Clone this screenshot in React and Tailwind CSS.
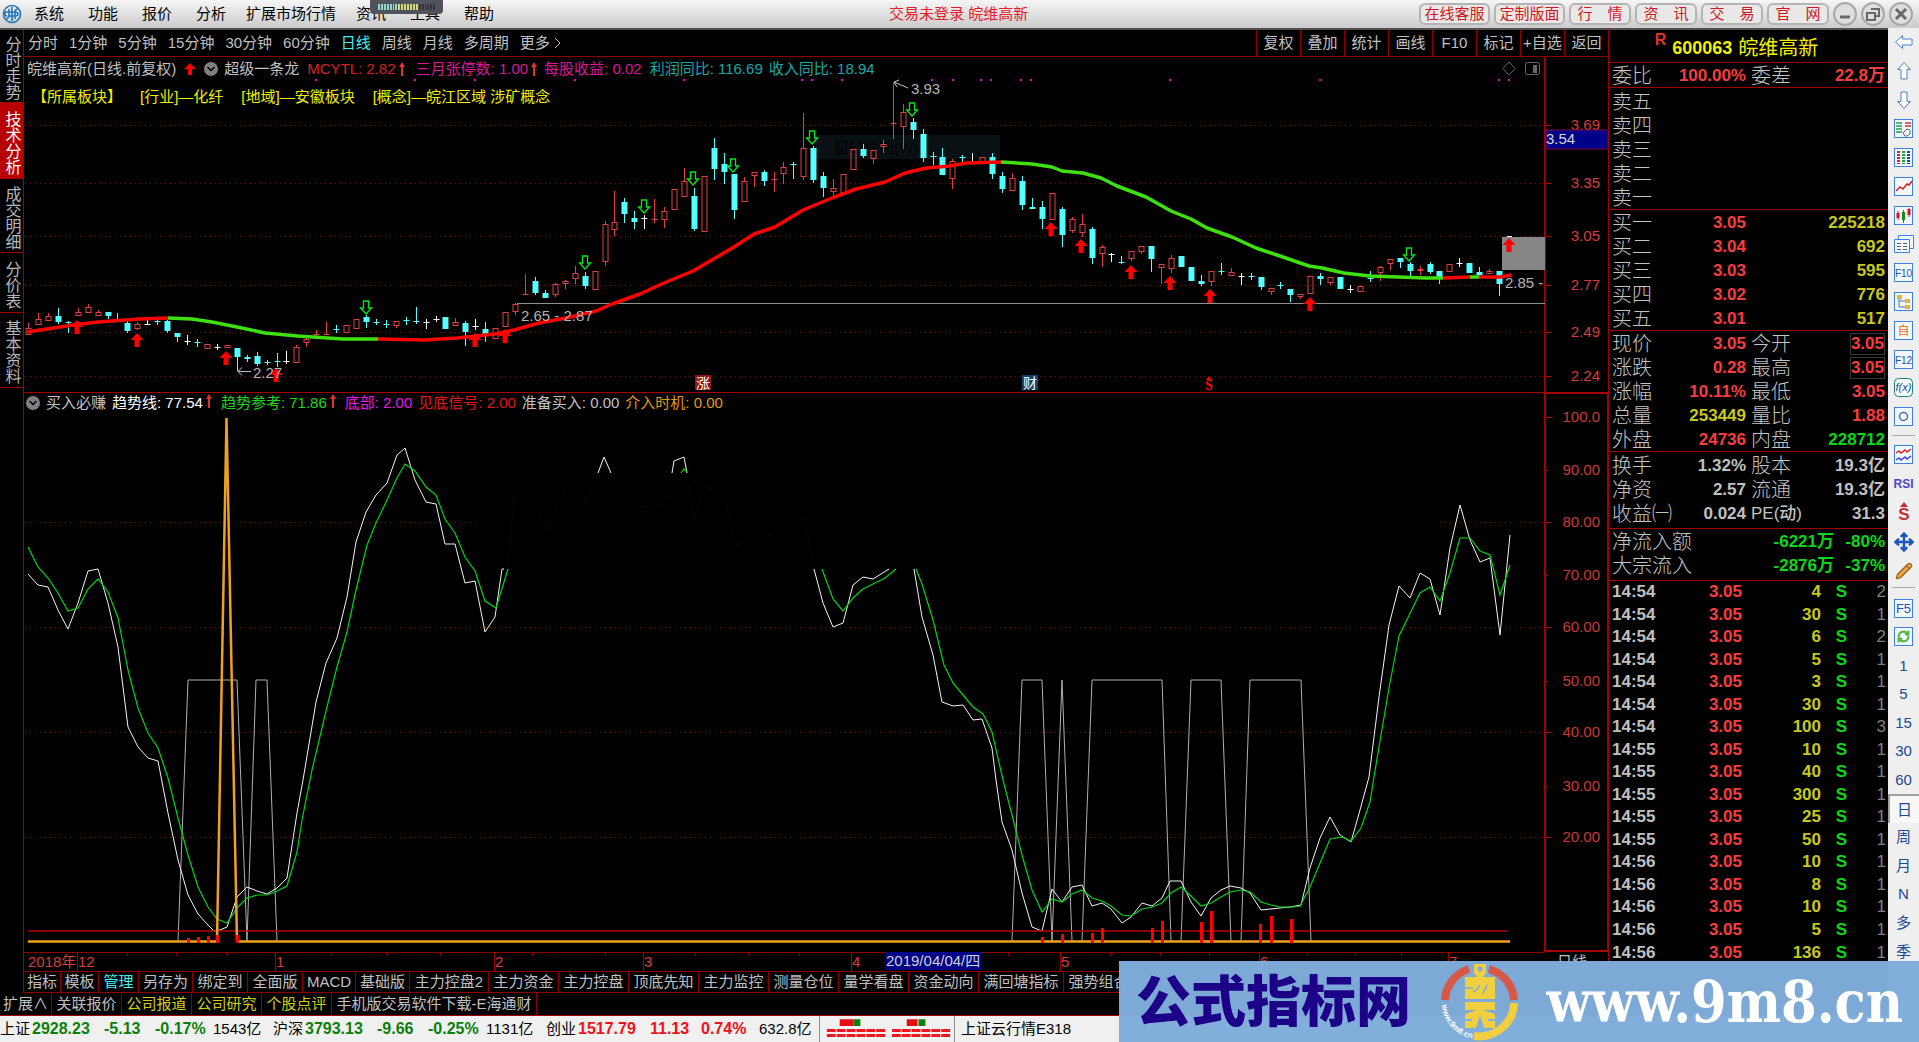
import { ChevronDown, Move, Pencil, RefreshCw } from "lucide-react";

// one entry per trading day: type, body top, body bottom, high, low
// r = rising (hollow red), c = falling (solid cyan), w = unchanged (white)
const CANDLES = `r 328 335 323 335|r 319 325 313 325|r 316 321 313 321|c 316 322 308 324|c 322 323 321 333|r 312 316 308 316|r 307 313 304 313|r 312 316 310 316|c 312 316 312 319|c 319 320 313 322
c 323 331 321 333|r 324 329 322 330|w 324 325 319 325|c 321 322 318 325|c 321 331 320 333|c 333 337 333 342|w 341 342 335 345|c 342 343 339 347|r 344 349 344 349|w 347 348 344 350
r 345 348 345 348|c 348 357 348 371|c 357 359 355 362|c 356 364 352 366|c 362 363 360 365|c 361 362 353 367|w 361 362 351 364|r 347 363 345 363|r 339 343 337 347|r 334 335 330 337
r 334 335 322 335|c 329 330 325 333|r 325 333 325 333|r 319 329 319 329|c 317 322 315 328|c 322 323 319 325|c 324 325 320 328|r 321 326 321 328|c 320 321 317 325|c 321 322 307 324
w 322 323 319 329|w 319 320 316 322|c 317 329 317 329|r 322 326 318 326|c 323 332 321 346|w 326 327 319 330|c 329 334 322 342|r 328 339 328 339|r 312 327 312 327|r 304 312 303 315
r 294 295 274 295|c 281 293 277 295|c 293 298 290 298|r 284 295 283 297|r 281 284 280 289|r 273 279 266 284|c 276 286 272 289|r 271 290 271 290|r 224 262 221 266|r 222 230 191 236
c 202 214 198 223|c 218 222 211 229|w 218 219 215 229|r 219 220 199 223|r 211 220 207 228|r 189 210 189 210|r 181 197 168 197|c 196 229 188 231|r 176 232 176 232|c 148 169 138 180
c 164 172 153 184|c 174 210 174 219|r 181 202 177 202|r 172 176 172 187|c 172 181 170 186|r 179 180 172 192|r 167 174 162 184|c 164 165 162 179|r 148 177 113 180|c 148 180 146 183
c 176 188 172 197|r 188 192 179 196|r 174 193 174 193|r 149 170 149 170|c 149 156 144 158|r 150 159 150 164|r 144 147 140 153|r 123 124 83 139|r 112 127 104 149|c 122 130 118 139
c 134 158 129 162|c 156 157 152 165|c 157 175 148 175|r 161 179 159 189|c 157 158 155 162|w 162 163 153 163|r 157 162 157 162|c 157 174 153 179|c 176 189 172 193|r 178 191 173 191
c 181 205 176 210|c 207 209 198 209|c 207 219 201 229|r 193 220 193 220|c 209 235 207 247|r 219 231 217 233|r 224 233 214 237|c 229 258 227 264|r 247 254 245 267|w 254 255 253 262
c 262 263 256 264|r 251 259 251 261|r 246 252 246 254|c 246 259 246 272|r 264 268 264 284|r 258 269 255 273|c 256 267 256 267|c 267 281 267 281|c 281 284 275 286|r 271 282 271 286
c 271 272 263 275|r 272 276 268 276|w 276 277 273 285|c 276 277 273 280|c 277 287 277 290|r 288 292 288 295|c 285 286 282 289|c 289 295 289 302|r 294 297 294 299|r 276 294 276 294
c 276 279 273 285|r 277 283 277 285|c 277 289 277 289|w 289 290 285 293|r 286 292 286 292|c 278 279 271 282|r 267 273 266 281|r 259 264 259 270|c 258 262 258 268|c 264 271 262 277
r 269 271 266 275|c 264 272 262 274|c 271 278 271 284|r 264 272 264 272|w 263 264 258 267|c 263 273 263 273|c 272 275 267 277|r 271 274 269 274|c 271 284 271 296`
  .split(/[\n|]/)
  .map((row) => {
    const [type, ...v] = row.split(" ");
    return [type, ...v.map(Number)];
  });

const CANDLE_COLOR = { r: "#e04040", c: "#54ffff", w: "#ffffff" };

const MA_LINES = [
  ["#ff0000", "27,332 73,325 98,322 139,319 168,318"],
  ["#3fe010", "168,318 192,319 212,322 237,327 265,333 298,336 343,339 378,339"],
  ["#ff0000", "378,339 424,340 457,338 495,334 514,330 539,323 571,317 596,311 612,304 640,294 664,283 693,271 734,247 754,234 775,227 803,210 832,198 856,189 885,182 905,173 926,168 950,166 966,163 1001,162"],
  ["#3fe010", "1001,162 1032,164 1052,167 1062,171 1083,173 1101,178 1117,186 1146,197 1171,211 1191,219 1207,228 1232,237 1256,248 1280,256 1309,266 1322,268 1344,273 1370,276 1426,278 1443,278"],
  ["#ff0000", "1443,278 1470,277"],
  ["#3fe010", "1470,277 1479,277"],
  ["#ff0000", "1479,277 1500,277 1511,275"],
];

const BUY_ARROWS = [[77, 320], [137, 333], [226, 351], [276, 368], [475, 333], [505, 329], [1051, 222], [1081, 239], [1131, 265], [1170, 276], [1210, 289], [1310, 297], [1509, 238]];
const SELL_ARROWS = [[366, 314], [585, 269], [644, 213], [693, 185], [733, 172], [812, 144], [912, 116], [1409, 261]];
const DOTS = [316, 415, 475, 575, 684, 802, 812, 842, 932, 953, 981, 991, 1021, 1031, 1170, 1320, 1499, 1509];
const PRICE_TICKS = [["3.69", 125], ["3.35", 183], ["3.05", 236], ["2.77", 285], ["2.49", 332], ["2.24", 376]];

const WHITE_LINES = [
  "28,574 38,585 48,587 58,610 68,629 78,603 88,571 98,569 108,603 118,647 128,727 138,747 148,758 158,761 168,813 178,860 188,895 198,914 208,925 214,931 220,930 227,927 237,897 247,887 257,891 267,894 277,888 287,878 297,813 303,780 311,732 316,702 326,663 337,638 347,597 356,542 366,512 376,495 387,483 397,455 405,448 415,480 426,502 436,504 445,544 455,544 465,583 475,581 485,632 495,617 502,569 504,569",
  "598,473 604,457 611,473",
  "672,473 674,461 684,457 687,473",
  "814,569 823,603 833,627 843,623 853,585 863,577 873,579 889,569",
  "914,569 922,617 933,655 942,702 953,706 963,705 973,720 982,719 992,748 996,780 1002,822 1012,850 1022,893 1032,927 1042,931 1052,889 1062,902 1072,887 1082,885 1092,906 1102,903 1111,909 1122,923 1131,917 1142,903 1152,906 1162,898 1170,881 1181,881 1191,902 1201,916 1211,898 1221,890 1230,886 1241,888 1250,893 1261,910 1280,908 1290,907 1301,905 1310,868 1320,838 1330,817 1340,835 1351,842 1360,810 1369,777 1379,697 1389,625 1399,586 1410,598 1420,573 1430,579 1440,615 1450,548 1460,505 1470,540 1480,562 1490,558 1500,635 1510,535",
];

const GREEN_LINES = [
  "28,547 38,567 48,578 58,593 68,611 78,608 88,589 98,579 108,592 118,618 128,670 138,708 148,733 158,748 168,778 178,818 188,855 198,887 208,907 217,919 227,923 237,908 247,898 257,895 267,895 277,891 287,886 297,852 302,820 312,770 327,707 337,667 347,632 356,590 367,545 376,523 387,500 397,478 405,464 415,471 426,487 436,495 445,519 455,533 465,557 475,571 485,601 496,608 508,569",
  "681,473 684,469 687,472",
  "822,569 833,599 843,611 853,598 863,589 873,584 885,578 896,569",
  "916,569 922,584 933,620 944,665 953,683 963,695 973,707 983,714 992,732 1003,780 1012,815 1022,855 1032,890 1042,912 1052,899 1062,902 1072,894 1082,890 1092,898 1102,901 1111,906 1122,915 1131,916 1142,909 1152,907 1162,903 1171,893 1181,887 1191,896 1201,906 1211,903 1221,897 1230,892 1241,890 1250,892 1261,902 1271,905 1280,907 1292,907 1300,906 1310,887 1330,839 1342,837 1351,841 1361,828 1370,802 1374,777 1379,747 1389,688 1399,636 1420,593 1430,587 1440,601 1450,573 1460,538 1470,538 1480,551 1490,555 1500,595 1510,565",
];

const READY_LINES = [
  "178,941 188,680 237,680 247,941 256,680 267,680 277,941",
  "1012,941 1022,680 1042,680 1052,941 1062,680 1072,941",
  "1082,941 1092,680 1162,680 1171,941",
  "1181,941 1191,680 1221,680 1231,941",
  "1241,941 1250,680 1301,680 1311,941",
];

const SIGNAL_BARS = [[188, 938], [198, 937], [208, 936], [217, 935], [237, 935], [1042, 937], [1062, 934], [1092, 933], [1102, 928], [1152, 928], [1162, 921], [1201, 922], [1211, 911], [1260, 924], [1271, 916], [1291, 919]];
const LEVEL_TICKS = [["100.0", 417], ["90.00", 470], ["80.00", 522], ["70.00", 575], ["60.00", 627], ["50.00", 681], ["40.00", 732], ["30.00", 786], ["20.00", 837]];
const DAY_TICKS = [127, 176, 226, 331, 386, 440, 532, 605, 695, 748, 799, 1008, 1110, 1160, 1209, 1307, 1355, 1401];

function PriceChart() {
  return (
    <svg className="block h-[335px] w-full" viewBox="24 57 1584 335" preserveAspectRatio="none" fontSize="15">
      <rect x="815" y="135" width="185" height="24" fill="#0a1115" />
      <text x="834" y="153" fill="#020405">窗口截图(W)</text>
      {PRICE_TICKS.map(([label, y]) => (
        <g key={label}>
          <line x1="25" x2="1545" y1={y + 0.5} y2={y + 0.5} stroke="#7c1010" strokeDasharray="1 4" />
          <line x1="1545" x2="1551" y1={y + 0.5} y2={y + 0.5} stroke="#b00000" />
          <text x="1600" y={y + 5} fill="#d83c3c" textAnchor="end">{label}</text>
        </g>
      ))}
      <line x1="1545" x2="1545" y1="57" y2="392" stroke="#a00000" strokeWidth="2" />
      <rect x="1546" y="130" width="62" height="19" fill="#000088" stroke="#800040" />
      <text x="1546" y="144" fill="#d8d8d8">3.54</text>

      {DOTS.map((x) => (
        <rect key={x} x={x - 1} y="79" width="2" height="2" fill="#e000e0" />
      ))}

      <rect x="1502" y="237" width="43" height="33" fill="#868686" />
      {CANDLES.map(([type, top, bottom, high, low], i) => {
        const x = Math.round(28 + i * 9.94) + 0.5;
        const color = CANDLE_COLOR[type];
        const doji = bottom - top <= 1;
        return (
          <g key={i} stroke={color}>
            <line x1={x} x2={x} y1={high} y2={type === "r" && !doji ? top : low} />
            {type === "r" && !doji && <line x1={x} x2={x} y1={bottom} y2={low} />}
            {doji ? (
              <line x1={x - 3} x2={x + 3} y1={top + 0.5} y2={top + 0.5} />
            ) : (
              <rect x={x - 2.5} y={top + 0.5} width="5" height={bottom - top - 1} fill={type === "r" ? "none" : color} />
            )}
          </g>
        );
      })}

      <line x1="517" x2="1545" y1="303.5" y2="303.5" stroke="#909090" />
      {MA_LINES.map(([color, points]) => (
        <polyline key={points} points={points} fill="none" stroke={color} strokeWidth="3.500" strokeLinejoin="round" />
      ))}
      {BUY_ARROWS.map(([x, y]) => (
        <path key={x} d={`M${x} ${y}l6.5 7h-4v7h-5v-7h-4z`} fill="#ff0000" />
      ))}
      {SELL_ARROWS.map(([x, y]) => (
        <path key={x} d={`M${x} ${y}l5.5-6h-3v-7h-5v7h-3z`} fill="none" stroke="#00e820" strokeWidth="1.300" />
      ))}
      <rect x="1507" y="236" width="5" height="1" fill="#fff" />

      <g fill="#b4b4b4">
        <text x="521" y="321">2.65 - 2.87</text>
        <text x="253" y="378">2.27</text>
        <text x="911" y="94">3.93</text>
        <text x="1505" y="288">2.85 -</text>
      </g>
      <path d="M251 371.5H238m4-4-4 4 4 4M908 88l-14-6m5-2-5 2 3 5" fill="none" stroke="#c0c0c0" />

      <rect x="695" y="375" width="16" height="15" fill="#8c1414" />
      <text x="703" y="388" fill="#fff" fontSize="14" textAnchor="middle">涨</text>
      <rect x="1022" y="375" width="16" height="15" fill="#124070" />
      <text x="1030" y="388" fill="#fff" fontSize="14" textAnchor="middle">财</text>
      <text x="1209" y="390" fill="#ff0000" fontSize="14" fontWeight="bold" fontFamily="Liberation Serif" textAnchor="middle">S</text>
      <path d="m1209 376 3 4h-6z" fill="#ff0000" />

      <path d="m1509 62 6 6.500-6 6.500-6-6.500z" fill="none" stroke="#686868" />
      <rect x="1525.500" y="62.500" width="14" height="12" rx="2" fill="none" stroke="#686868" />
      <rect x="1533" y="65" width="4" height="8" fill="#686868" />
    </svg>
  );
}

function TrendChart() {
  return (
    <svg className="block h-[560px] w-full overflow-visible" viewBox="24 392 1584 560" preserveAspectRatio="none" fontSize="15">
      <line x1="24" x2="1608" y1="392.500" y2="392.500" stroke="#a00000" />
      <line x1="24" x2="1545" y1="952.500" y2="952.500" stroke="#8c0000" />
      {[627, 732, 837].map((y) => (
        <line key={y} x1="25" x2="1545" y1={y + 0.5} y2={y + 0.5} stroke="#7c1010" strokeDasharray="1 4" />
      ))}
      <path d="M25 522.500H480M1440 522.500H1545" stroke="#7c1010" strokeDasharray="1 4" />
      {LEVEL_TICKS.map(([label, y], i) => (
        <g key={label}>
          <line x1="1545" x2={i % 2 ? 1548 : 1551} y1={y + 0.5} y2={y + 0.5} stroke="#b00000" />
          <text x="1600" y={y + 5} fill="#c83838" textAnchor="end">{label}</text>
        </g>
      ))}
      <rect x="1545" y="393" width="63" height="558" fill="none" stroke="#a80000" strokeWidth="2" />
      {DAY_TICKS.map((x) => (
        <line key={x} x1={x + 0.5} x2={x + 0.5} y1="953" y2="956" stroke="#8c0000" />
      ))}

      <polyline
        points="508,569 515,485 535,502 546,532 563,493 575,475 586,504 604,457 640,505 655,510 665,500 674,461 684,457 694,520 704,486 725,495 735,547 755,530 775,537 797,518 805,520 814,569"
        fill="none"
        stroke="#080808"
      />
      {READY_LINES.map((points) => (
        <polyline key={points} points={points} fill="none" stroke="#b0b0b0" />
      ))}
      {WHITE_LINES.map((points) => (
        <polyline key={points} points={points} fill="none" stroke="#f4f4f4" />
      ))}
      {GREEN_LINES.map((points) => (
        <polyline key={points} points={points} fill="none" stroke="#00d414" strokeWidth="1.200" />
      ))}
      <line x1="28" x2="1508" y1="931" y2="931" stroke="#b80000" strokeWidth="1.500" />
      <polyline points="28,941.500 217,941.500 226.500,418 237,941.500 1510,941.500" fill="none" stroke="#f0a020" strokeWidth="2.500" strokeLinejoin="bevel" />
      {SIGNAL_BARS.map(([x, y]) => (
        <rect key={x} x={x - 1} y={y} width="3" height={943 - y} fill="#ff0000" />
      ))}
    </svg>
  );
}

function Rise({ big }) {
  return big ? (
    <svg className="mx-2 h-3 w-3" viewBox="0 0 12 12"><path d="M6 0l6 6H8v6H4V6H0z" fill="#ff0000" /></svg>
  ) : (
    <svg className="mx-0.5 h-4 w-2" viewBox="0 0 8 16"><path d="M4 1l3 5H5v9H3V6H1z" fill="#e03030" /></svg>
  );
}

function Fold() {
  return (
    <button aria-label="指标菜单" className="grid h-3.5 w-3.5 place-items-center rounded-full bg-[#808080] text-black">
      <ChevronDown className="h-3 w-3" strokeWidth={3} />
    </button>
  );
}

const MENU = ["系统", "功能", "报价", "分析", "扩展市场行情", "资讯", "工具", "帮助"];
const LINKS = ["行　情", "资　讯", "交　易", "官　网"];

function TitleBar() {
  return (
    <header className="flex h-7 items-center bg-linear-to-b from-[#f6f6f6] to-[#cbcbcb] pr-1.5 pl-0.5 text-black">
      <svg className="h-5 w-5 shrink-0" viewBox="0 0 20 20" fill="none" stroke="#2478b8" strokeWidth="1.600">
        <circle cx="10" cy="10" r="8.500" />
        <path d="M10 3v14M3 8h10c4 0 4 4 0 4H7M5 12c-3 0-3-4 0-4M7 5v6c0 3-3 4-3 4M13 15V8c0-3 3-3 3-3" />
      </svg>
      <nav className="relative ml-3 flex">
        {MENU.map((m) => (
          <button key={m} className={m === "扩展市场行情" ? "mr-5 -ml-1" : "mr-6"}>{m}</button>
        ))}
        {/* level meter hanging over the menu */}
        <div className="absolute -top-1 left-[336px] flex h-3.5 w-[73px] gap-px rounded-b bg-[#50525c] px-2 py-1">
          {Array.from({ length: 20 }, (_, i) => (
            <i key={i} className={i < 7 ? "w-0.5 bg-[#8fd8d0]" : i < 14 ? "w-0.5 bg-[#d8d870]" : "w-0.5 bg-[#34363e]"} />
          ))}
        </div>
      </nav>
      <p className="flex-1 pr-5 text-center text-[#e81c28]">交易未登录 皖维高新</p>
      <div className="flex items-center gap-1 text-[#d01824]">
        {["在线客服", "定制版面"].map((t) => (
          <button key={t} className="h-[22px] w-[71px] rounded-md border-2 border-[#b4b4b4] bg-[#e8e8e8] leading-4 whitespace-nowrap">
            <span className="-mx-2">{t}</span>
          </button>
        ))}
        {LINKS.map((t) => (
          <button key={t} className="h-[22px] w-[62px] rounded-md border-2 border-[#b4b4b4] bg-[#e8e8e8] leading-4">{t}</button>
        ))}
      </div>
      <div className="ml-1 flex gap-1">
        {["M5 13h10", "M8 5h8v7h-3M4 9h8v7H4z", "m5 5 10 10M15 5 5 15"].map((d, i) => (
          <button key={d} aria-label={["最小化", "还原", "关闭"][i]} className="grid h-6 w-6 place-items-center rounded-full border-2 border-[#a8a8a8] bg-[#dedede]">
            <svg className="h-5 w-5" viewBox="0 0 20 20" fill="none" stroke="#686868" strokeWidth={i === 1 ? 2 : 3}><path d={d} /></svg>
          </button>
        ))}
      </div>
    </header>
  );
}

const VIEWS = [["分时走势", "h-[73px]"], ["技术分析", "h-[76px]"], ["成交明细", "h-[74px]"], ["分价表", "h-[60px]"], ["基本资料", "h-[75px]"]];

function ViewTabs() {
  return (
    <nav className="w-6 shrink-0 border-r border-[#a00000]">
      {VIEWS.map(([name, height]) => (
        <button
          key={name}
          className={`${height} block w-full border-b border-[#a00000] pt-1 text-base leading-[22px] [writing-mode:vertical-rl] ${name === "技术分析" ? "bg-[#b80000] text-white" : "text-[#b8b8b8]"}`}
        >
          {name}
        </button>
      ))}
    </nav>
  );
}

const PERIODS = ["分时", "1分钟", "5分钟", "15分钟", "30分钟", "60分钟", "日线", "周线", "月线", "多周期"];
const TOOLS = ["复权", "叠加", "统计", "画线", "F10", "标记", "+自选", "返回"];

function PeriodBar() {
  return (
    <div className="flex h-[27px] border-b border-[#8c0000] pl-1">
      <div className="flex flex-1 items-center gap-[11px]">
        {PERIODS.map((p) => (
          <button key={p} className={p === "日线" ? "text-[#40f0f0]" : ""}>{p}</button>
        ))}
        <button className="flex items-center">
          更多
          <svg className="ml-1 h-3 w-2" viewBox="0 0 8 12" fill="none" stroke="#c0c0c0"><path d="m1 1 5 5-5 5" /></svg>
        </button>
      </div>
      {TOOLS.map((t) => (
        <button key={t} className="w-11 border-l border-[#8c0000] whitespace-nowrap">{t}</button>
      ))}
    </div>
  );
}

const MONTHS = ["12", "1", "2", "3", "4", "5", "6", "7"];

function DateAxis() {
  return (
    <div className="relative flex h-5 border-b border-[#8c0000] leading-5 text-[#d83c3c]">
      <div className="grid flex-1 grid-cols-[53fr_198fr_219fr_149fr_208fr_209fr_199fr_189fr_97fr]">
        <span className="overflow-hidden pl-1">2018年</span>
        {MONTHS.map((m) => (
          <span key={m} className="border-l border-[#a00000]">{m}</span>
        ))}
      </div>
      <span className="w-[63px] pl-3 text-[#c0c0c0]">日线</span>
      <span className="absolute top-0 left-[861px] bg-[#000088] px-px leading-[18px] text-[#d0d0d0]">2019/04/04/四</span>
    </div>
  );
}

const TEMPLATES = [
  ["指标", "w-[37px]"], ["模板", "w-[38px]"], ["管理", "w-[40px]"], ["另存为", "w-[54px]"], ["绑定到", "w-[55px]"], ["全面版", "w-[55px]"],
  ["MACD", "w-[53px]"], ["基础版", "w-[54px]"], ["主力控盘2", "w-[79px]"], ["主力资金", "w-[70px]"], ["主力控盘", "w-[70px]"],
  ["顶底先知", "w-[70px]"], ["主力监控", "w-[70px]"], ["测量仓位", "w-[70px]"], ["量学看盘", "w-[70px]"], ["资金动向", "w-[70px]"],
  ["满回塘指标", "w-[85px]"], ["强势组合", "w-[70px]"],
];

const EXTRAS = [["扩展∧", "w-[52px]"], ["关联报价", "w-[70px]"], ["公司报道", "w-[70px]"], ["公司研究", "w-[70px]"], ["个股点评", "w-[70px]"], ["手机版交易软件下载-E海通财", "w-[205px]"]];

const RED = "text-[#f83c40]";
const YELLOW = "text-[#c8c81c]";
const GREEN = "text-[#08d818]";
const GRAY = "text-[#c0c0c0]";

const ASKS = ["五", "四", "三", "二", "一"];
const BIDS = [["一", "3.05", "225218"], ["二", "3.04", "692"], ["三", "3.03", "595"], ["四", "3.02", "776"], ["五", "3.01", "517"]];
const STATS = [
  ["现价", "3.05", RED, "今开", "3.05", RED, true],
  ["涨跌", "0.28", RED, "最高", "3.05", RED, true],
  ["涨幅", "10.11%", RED, "最低", "3.05", RED],
  ["总量", "253449", YELLOW, "量比", "1.88", RED],
  ["外盘", "24736", RED, "内盘", "228712", GREEN],
];
const SHARES = [
  ["换手", "1.32%", GRAY, "股本", "19.3亿", GRAY],
  ["净资", "2.57", GRAY, "流通", "19.3亿", GRAY],
  ["收益㈠", "0.024", GRAY, "PE(动)", "31.3", GRAY],
];
const TRADES = `14:54 4 2|14:54 30 1|14:54 6 2|14:54 5 1|14:54 3 1|14:54 30 1|14:54 100 3|14:55 10 1|14:55 40 1|14:55 300 1|14:55 25 1|14:55 50 1|14:56 10 1|14:56 8 1|14:56 10 1|14:56 5 1|14:56 136 1`
  .split("|")
  .map((t) => t.split(" "));

function PairTable({ rows, className = "" }) {
  return (
    <div className={`border-b border-[#a00000] px-[3px] ${className}`}>
      <table className="w-full table-fixed">
        <colgroup>
          <col className="w-[62px]" />
          <col className="w-[72px]" />
          <col className="w-[63px]" />
          <col />
        </colgroup>
        <tbody>
          {rows.map(([a, av, ac, b, bv, bc, boxed]) => (
            <tr key={a} className="h-6 leading-[22px]">
              <th className="pt-0.5 text-left text-xl leading-[22px] font-light whitespace-nowrap">{a}</th>
              <td className={`pt-0.5 text-right font-bold ${ac}`}>{av}</td>
              <th className={`pt-0.5 pl-[5px] text-left whitespace-nowrap ${b.startsWith("PE") ? "font-medium" : "text-xl leading-[22px] font-light"}`}>{b}</th>
              <td className={`pt-0.5 text-right font-bold ${bc}`}>
                <span className={boxed ? "inline-block border border-[#383838] leading-5" : ""}>{bv}</span>
              </td>
            </tr>
          ))}
        </tbody>
      </table>
    </div>
  );
}

function QuotePanel() {
  return (
    <aside className="w-[280px] shrink-0 border-t-2 border-l border-t-[#505050] border-l-[#a00000] text-[17px] leading-6 text-[#c4c4c4]">
      <h1 className="flex h-[33px] items-center justify-center border-b border-[#a00000] pt-1 pr-6 text-xl font-normal text-[#f0f000]">
        <sup className="mr-1.5 text-base font-bold text-[#e03030]">R</sup>
        <b className="mr-1.5 text-lg">600063</b>
        皖维高新
      </h1>
      <PairTable rows={[["委比", "100.00%", RED, "委差", "22.8万", RED]]} />
      <div className="border-b border-[#a00000] px-[3px] pt-px">
        <table className="w-full">
          <tbody>
            {ASKS.map((n) => (
              <tr key={n} className="h-6"><th className="pt-0.5 text-left text-xl leading-[22px] font-light">卖{n}</th></tr>
            ))}
          </tbody>
        </table>
      </div>
      <div className="border-b border-[#a00000] px-[3px]">
        <table className="w-full table-fixed">
          <tbody>
            {BIDS.map(([n, price, volume]) => (
              <tr key={n} className="h-6 leading-[22px]">
                <th className="w-[62px] pt-0.5 text-left text-xl leading-[22px] font-light">买{n}</th>
                <td className={`w-[72px] pt-0.5 text-right font-bold ${RED}`}>{price}</td>
                <td className={`pt-0.5 text-right font-bold ${YELLOW}`}>{volume}</td>
              </tr>
            ))}
          </tbody>
        </table>
      </div>
      <PairTable rows={STATS} />
      <PairTable rows={SHARES} className="pt-px pb-[3px]" />
      <div className="border-b border-[#a00000] px-[3px] pb-[3px]">
        <table className="w-full">
          <tbody>
            {[["净流入额", "-6221万", "-80%"], ["大宗流入", "-2876万", "-37%"]].map(([name, sum, pct]) => (
              <tr key={name} className={`h-6 text-right leading-[22px] font-bold ${GREEN}`}>
                <th className="pt-0.5 text-left text-xl leading-[22px] font-light text-[#c4c4c4]">{name}</th>
                <td className="pt-0.5">{sum}</td>
                <td className="w-[51px] pt-0.5">{pct}</td>
              </tr>
            ))}
          </tbody>
        </table>
      </div>
      <table className="ml-[3px] h-[383px] w-[274px] table-fixed leading-[22px]">
        <tbody>
          {TRADES.map(([time, volume, count], i) => (
            <tr key={i} className="text-right font-bold">
              <td className={`w-[60px] text-left ${GRAY}`}>{time}</td>
              <td className={`w-[70px] ${RED}`}>3.05</td>
              <td className={`w-[79px] ${YELLOW}`}>{volume}</td>
              <td className={`w-[26px] ${GREEN}`}>S</td>
              <td className="font-normal text-[#808080]">{count}</td>
            </tr>
          ))}
        </tbody>
      </table>
    </aside>
  );
}

function Boxed({ children }) {
  return (
    <svg className="h-[19px] w-[19px]" viewBox="0 0 19 19" fill="none">
      <rect x="0.500" y="0.500" width="18" height="18" fill="#f4f8ff" stroke="#4080e0" />
      {children}
    </svg>
  );
}

const label = (text, fill = "#2850b0", size = 11) => (
  <Boxed><text x="9.500" y="13.500" fill={fill} fontSize={size} textAnchor="middle">{text}</text></Boxed>
);
const arrow = (turn) => (
  <svg className={`h-5 w-5 ${turn}`} viewBox="0 0 20 20"><path d="M10 1.500l6.500 7h-3.500v9.500h-6v-9.500H3.500z" fill="#fff" stroke="#4a80d8" /></svg>
);

const TOP_ICONS = [
  ["后退", arrow("-rotate-90")],
  ["上翻", arrow("")],
  ["下翻", arrow("rotate-180")],
  ["综合", <Boxed><path d="M2 4h6M2 7h6M2 10h6M2 13h6" stroke="#20a040" strokeWidth="1.500" /><path d="M11 4h6M11 7h6" stroke="#e03030" strokeWidth="1.500" /><path d="M9 14c2-1 2-3 4-4l3 1v4l-3 2h-2z" fill="#fff" stroke="#606060" /></Boxed>],
  ["列表", <Boxed><g strokeWidth="3" strokeDasharray="2 1"><path d="M4.500 3v13" stroke="#e02020" /><path d="M9.500 3v13" stroke="#20a030" /><path d="M14.500 3v13" stroke="#2040d0" /></g></Boxed>],
  ["分时图", <Boxed><path d="M2 14l4-4 3 2 4-5 2 1 3-4" stroke="#e02020" strokeWidth="1.500" /></Boxed>],
  ["K线图", <Boxed><path d="M4 5v9M15 2v9" stroke="#e01010" /><path d="M9.500 4v13" stroke="#109010" /><path d="M4 7v5M15 3v6" stroke="#e01010" strokeWidth="3" /><path d="M9.500 6v8" stroke="#109010" strokeWidth="3" /></Boxed>],
  ["窗口", <svg className="h-5 w-5" viewBox="0 0 20 20" fill="#f4f8ff" stroke="#4080e0"><path d="M4.500 1.500h15v13h-15z" /><path d="M.5 5.500h15v13H.5z" /><path d="M3 9.500h4M9 9.500h4M3 12.500h4M9 12.500h4M3 15.500h4M9 15.500h4" stroke="#606060" /></svg>],
  ["F10", label("F10", "#2850b0", 10)],
  ["树形", <Boxed><path d="M5 6v9h6M5 9h6" stroke="#4070d0" /><path d="M3 3h5v4H3zM11 7h5v4h-5zM11 13h5v4h-5z" fill="#f0b030" /></Boxed>],
  ["自选", label("自", "#f07020", 12)],
  ["F12", label("F12", "#2850b0", 10)],
  ["公式", <svg className="h-[19px] w-[19px]" viewBox="0 0 19 19"><rect x="0.500" y="0.500" width="18" height="18" rx="4" fill="#f4fcff" stroke="#208080" /><text x="9.500" y="13" fill="#204890" fontSize="11" fontStyle="italic" textAnchor="middle">f(x)</text></svg>],
  ["周期", <Boxed><circle cx="9.500" cy="9.500" r="4" stroke="#4070c0" strokeWidth="1.500" /></Boxed>],
];

const MID_ICONS = [
  ["多股", <Boxed><path d="M2 8l3-2 2 2 4-3 2 2 4-3" stroke="#e02020" strokeWidth="1.500" /><path d="M2 15l3-2 2 2 4-3 2 2 4-3" stroke="#4040e0" strokeWidth="1.500" /></Boxed>],
  ["指标", <b className="text-xs text-[#4848c8]">RSI</b>],
  ["买卖", <svg className="h-6 w-5" viewBox="0 0 20 24"><path d="m10 1 4 5H6z" fill="#c03038" /><text x="10" y="19" fill="#c03038" fontSize="17" fontWeight="bold" textAnchor="middle">S</text></svg>],
  ["移动", <Move className="h-5 w-5 text-[#1858c0]" strokeWidth={3} />],
  ["画笔", <Pencil className="h-[18px] w-[18px] fill-[#f0b040] text-[#a86830]" />],
];

const LOW_ICONS = [
  ["F5", label("F5", "#2850b0", 13)],
  ["刷新", <Boxed><RefreshCw x="3" y="3" width="13" height="13" stroke="#50b840" strokeWidth={4} /></Boxed>],
  ...["1", "5", "15", "30", "60", "日", "周", "月", "N", "多", "季"].map((t) => [t, t]),
];

function IconBar() {
  const cell = ([name, icon]) => (
    <button
      key={name}
      aria-label={name}
      className={`grid w-full place-items-center ${name === "日" ? "border-t-2 border-l-2 border-[#a0a0a0] bg-[#f8f8f8]" : ""}`}
    >
      {icon}
    </button>
  );
  return (
    <nav className="w-[31px] shrink-0 bg-[#efefef] text-[#204898]">
      <div className="grid h-[403px] auto-rows-fr">{TOP_ICONS.map(cell)}</div>
      <hr className="mx-1 mt-1 mb-1 border-[#a8a8a8]" />
      <div className="grid h-[145px] auto-rows-fr">{MID_ICONS.map(cell)}</div>
      <hr className="mx-1 mt-0.5 mb-1.5 border-[#a8a8a8]" />
      <div className="grid h-[372px] auto-rows-fr">{LOW_ICONS.map(cell)}</div>
    </nav>
  );
}

const INDEXES = [
  ["上证", "2928.23", "-5.13", "-0.17%", "1543亿", "text-[#0a800a]"],
  ["沪深", "3793.13", "-9.66", "-0.25%", "1131亿", "text-[#0a800a]"],
  ["创业", "1517.79", "11.13", "0.74%", "632.8亿", "text-[#f01018]"],
];

function StatusBar() {
  return (
    <footer className="flex h-[26px] items-center bg-[#f0f0f0] text-black">
      {INDEXES.map(([name, value, diff, pct, sum, color]) => (
        <div key={name} className="flex w-[273px] items-center">
          <span className="w-8">{name}</span>
          <b className={`flex text-base ${color}`}>
            <span className="w-[72px]">{value}</span>
            <span className="w-[51px]">{diff}</span>
            <span className="w-[58px]">{pct}</span>
          </b>
          <span>{sum}</span>
        </div>
      ))}
      <svg className="h-[26px] w-[136px] border-x border-[#909090]" viewBox="0 0 136 26">
        <path d="M20 3h14v7H20zM88 3h11v7H88z" fill="#e80c14" />
        <path d="M34 3h7v7h-7zM100 3h7v7h-7z" fill="#0a800a" />
        <path d="M7 14.500h60M7 19.500h60M73 14.500h60M73 19.500h60" stroke="#f01820" strokeWidth="3" strokeDasharray="9 1" />
      </svg>
      <span className="ml-1.5">上证云行情E318</span>
    </footer>
  );
}

function SiteBanner() {
  return (
    <div className="absolute right-0 bottom-0 flex h-[81px] w-[800px] items-center bg-[#80acda]/98 pr-4 pl-[17px]">
      <strong className="text-[55px] leading-[80px] font-black text-[#1c0088]">公式指标网</strong>
      <svg className="ml-7 h-[78px] w-[82px] shrink-0" viewBox="0 0 82 78">
        <path d="M6 37A35 34 0 0 1 30 6" fill="none" stroke="#d85848" strokeWidth="8" />
        <path d="M50 6a35 34 0 0 1 25 31" fill="none" stroke="#d85848" strokeWidth="8" />
        <path d="M75 40a35 34 0 0 1-40 33" fill="none" stroke="#f0d040" strokeWidth="8" />
        <path d="M35 1h12v9l-3 4h12v22H26V14h12l-3-4z" fill="#f0d040" />
        <path d="M26 25h8M40 22c0 5-3 5-6 7M48 22c-1 5-4 6-4 9" fill="none" stroke="#80acda" strokeWidth="1.500" />
        <circle cx="41" cy="6" r="2.500" fill="#80acda" />
        <path d="M26 39h30v8H44l12 4v5h-7v2h7v7H45l-4-13-4 13H26v-7h7v-2h-7v-5l12-4H26z" fill="#f0d040" />
        <path id="ring" d="M3 42a36 36 0 0 0 29 33" fill="none" />
        <text fill="#fff" fontSize="8" fontWeight="bold"><textPath href="#ring">www.9m8.cn</textPath></text>
      </svg>
      <a href="#" className="ml-auto font-['DejaVu_Serif_Condensed','Liberation_Serif',serif] text-[57px] leading-[72px] font-bold text-white">www.9m8.cn</a>
    </div>
  );
}

export default function App() {
  return (
    <div className="relative flex min-h-screen flex-col overflow-hidden bg-black font-['Liberation_Sans','Noto_Sans_CJK_SC',sans-serif] text-[15px] leading-5 text-[#c0c0c0]">
      <TitleBar />
      <main className="flex flex-1">
        <div className="flex min-w-0 flex-1 flex-col border-t-2 border-[#505050]">
          <div className="flex">
            <ViewTabs />
            <div className="min-w-0 flex-1">
              <PeriodBar />

              <section className="relative">
                <PriceChart />
                <div className="absolute top-0.5 left-[3px] flex items-center whitespace-nowrap">
                  皖维高新(日线.前复权)
                  <Rise big />
                  <Fold />
                  <span className="mr-2 ml-1.5">超级一条龙</span>
                  <span className="text-[#d82020]">MCYTL: 2.82</span>
                  <Rise />
                  <span className="ml-2 text-[#d81898]">三月张停数: 1.00</span>
                  <Rise />
                  <span className="mr-2 ml-1 text-[#d81898]">每股收益: 0.02</span>
                  <span className="mr-1.5 text-[#18a8a8]">利润同比: 116.69</span>
                  <span className="text-[#18a8a8]">收入同比: 18.94</span>
                </div>
                <div className="absolute top-[30px] left-2 flex gap-[18px] whitespace-nowrap text-[#f0f000]">
                  <span>【所属板块】</span>
                  <span>[行业]—化纤</span>
                  <span>[地域]—安徽板块</span>
                  <span>[概念]—皖江区域 涉矿概念</span>
                </div>
              </section>

              <section className="relative">
                <TrendChart />
                <div className="absolute top-px left-0.5 flex items-center gap-1.5 whitespace-nowrap">
                  <Fold />
                  <span>买入必赚</span>
                  <span className="flex text-white">趋势线: 77.54<Rise /></span>
                  <span className="flex text-[#18d818]">趋势参考: 71.86<Rise /></span>
                  <span className="text-[#e818e8]">底部: 2.00</span>
                  <span className="text-[#e01818]">见底信号: 2.00</span>
                  <span>准备买入: 0.00</span>
                  <span className="text-[#e09818]">介入时机: 0.00</span>
                </div>
              </section>

              <DateAxis />
              <div className="flex h-[21px] border-b border-[#8c0000]">
                {TEMPLATES.map(([name, width]) => (
                  <button key={name} className={`${width} shrink-0 border-r border-[#8c0000] whitespace-nowrap ${name === "管理" ? "text-[#40f0f0]" : ""}`}>
                    {name}
                  </button>
                ))}
              </div>
            </div>
          </div>
          <div className="flex h-[23px] border-b border-[#a00000]">
            {EXTRAS.map(([name, width], i) => (
              <button key={name} className={`${width} border-r border-[#8c0000] whitespace-nowrap ${i > 1 && i < 5 ? "text-[#d0d010]" : ""}`}>
                {name}
              </button>
            ))}
          </div>
        </div>
        <QuotePanel />
        <IconBar />
      </main>
      <StatusBar />
      <SiteBanner />
    </div>
  );
}
